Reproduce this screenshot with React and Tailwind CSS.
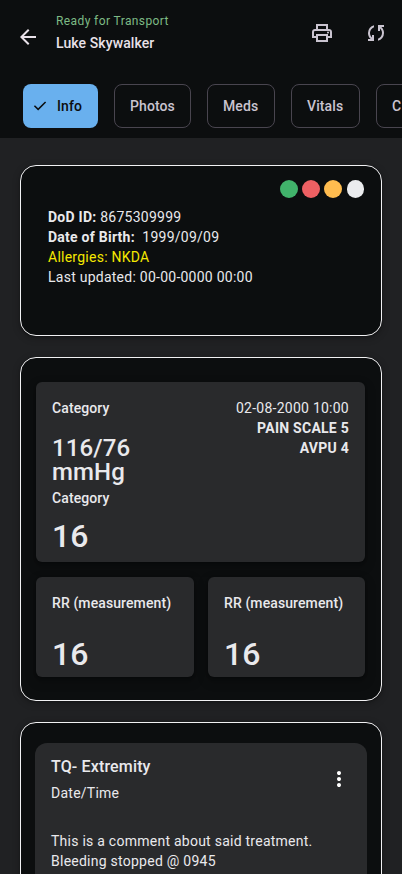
import clsx from 'clsx';

const TABS = [
  { label: 'Info', width: 'w-[75px]' },
  { label: 'Photos', width: 'w-[77px]' },
  { label: 'Meds', width: 'w-[68px]' },
  { label: 'Vitals', width: 'w-[69px]' },
  { label: 'C', width: 'w-[69px]' },
];

const DOTS = ['bg-[#41b36b]', 'bg-[#ee6063]', 'bg-[#ffbc4f]', 'bg-[#ebecee]'];

const ICONS = {
  back: 'M313-440l224 224-57 56-320-320 320-320 57 56-224 224h487v80H313Z',
  print:
    'M640-640v-120H320v120h-80v-200h480v200h-80Zm-480 80h640-640Zm560 100q17 0 28.5-11.5T760-500q0-17-11.5-28.5T720-540q-17 0-28.5 11.5T680-500q0 17 11.5 28.5T720-460Zm-80 260v-160H320v160h320Zm80 80H240v-160H80v-240q0-51 35-85.5t85-34.5h560q51 0 85.5 34.5T880-520v240H720v160Zm80-240v-160q0-17-11.5-28.5T760-560H200q-17 0-28.5 11.5T160-520v160h80v-80h480v80h80Z',
  sync:
    'M160-160v-80h110l-16-14q-52-46-73-105t-21-119q0-111 66.5-197.5T400-790v84q-72 26-116 88.5T240-478q0 45 17 87.5t53 78.5l10 10v-98h80v240H160Zm400-10v-84q72-26 116-88.5T720-482q0-45-17-87.5T650-648l-10-10v98h-80v-240h240v80H690l16 14q49 49 71.5 106.5T800-482q0 111-66.5 197.5T560-170Z',
  check: 'M382-240 154-468l57-57 171 171 367-367 57 57-424 424Z',
  more:
    'M480-160q-33 0-56.5-23.5T400-240q0-33 23.5-56.5T480-320q33 0 56.5 23.5T560-240q0 33-23.5 56.5T480-160Zm0-240q-33 0-56.5-23.5T400-480q0-33 23.5-56.5T480-560q33 0 56.5 23.5T560-480q0 33-23.5 56.5T480-400Zm0-240q-33 0-56.5-23.5T400-720q0-33 23.5-56.5T480-800q33 0 56.5 23.5T560-720q0 33-23.5 56.5T480-640Z',
};

const Icon = ({ name, className }) => (
  <svg viewBox="0 -960 960 960" fill="currentColor" className={clsx('shrink-0', className)}>
    <path d={ICONS[name]} />
  </svg>
);

const Header = () => (
  <header className="h-[138px] bg-[#0c0e0f] overflow-hidden">
    <div className="flex items-start h-[84px] pl-4 pr-[14px]">
      <button className="mt-[25px] text-[#e9e1e9]">
        <Icon name="back" className="w-6 h-6" />
      </button>
      <div className="ml-4 mt-3 flex-1">
        <p className="text-xs leading-4 pt-px tracking-[0.4px] text-[#7dba85]">Ready for Transport</p>
        <h1 className="mt-[4px] text-sm leading-5 font-medium tracking-[0.1px] text-[#e9e1e9]">Luke Skywalker</h1>
      </div>
      <div className="flex gap-[30px] mt-[21px] text-[#cac4d0]">
        <button><Icon name="print" className="w-6 h-6" /></button>
        <button><Icon name="sync" className="w-6 h-6" /></button>
      </div>
    </div>
    <nav className="flex gap-4 pl-[23px]">
      {TABS.map(({ label, width }, i) => (
        <button
          key={label}
          className={clsx(
            'flex items-center shrink-0 h-11 rounded-lg text-sm font-medium tracking-[0.1px]',
            width,
            i === 0 ? 'gap-2 pl-2 bg-[#69b0ee] text-[#0c0e0f]' : 'pl-[15px] border border-[#49454f] text-[#cac4d0]'
          )}
        >
          {i === 0 && <Icon name="check" className="w-[18px] h-[18px]" />}
          {label}
        </button>
      ))}
    </nav>
  </header>
);

const Card = ({ className, children }) => (
  <section
    className={clsx(
      'w-[362px] rounded-[16px] border border-[#f1f1f3] bg-[#0c0e0f] shadow-[0_2px_6px_2px_rgba(0,0,0,0.15),0_1px_2px_rgba(0,0,0,0.3)]',
      className
    )}
  >
    {children}
  </section>
);

const Tile = ({ className, children }) => (
  <div
    className={clsx(
      'rounded-[6px] bg-[#292a2c] px-4 shadow-[0_4px_8px_3px_rgba(0,0,0,0.15),0_1px_3px_rgba(0,0,0,0.3)]',
      className
    )}
  >
    {children}
  </div>
);

const Label = ({ children }) => (
  <p className="text-sm leading-5 font-medium tracking-[0.1px] whitespace-nowrap">{children}</p>
);

const Measurement = ({ className }) => (
  <Tile className={clsx('h-[100px] pt-4', className)}>
    <Label>RR (measurement)</Label>
    <p className="mt-[21px] text-[32px] leading-10 font-medium">16</p>
  </Tile>
);

const App = () => (
  <div className="w-full h-[874px] overflow-hidden bg-[#202123] text-[#e9e9ec] font-['Roboto',sans-serif]">
    <Header />
    <main className="flex flex-col items-center px-px pt-[27px]">
      <Card className="h-[171px] pl-[27px] pr-[16.6px] pt-[14px]">
        <div className="flex justify-end gap-[4.6px]">
          {DOTS.map((dot) => (
            <span key={dot} className={clsx('w-[17.7px] h-[17.7px] rounded-full', dot)} />
          ))}
        </div>
        <div className="mt-[9.3px] text-sm leading-5 tracking-[0.25px]">
          <p><b className="font-bold">DoD ID:</b> 8675309999</p>
          <p><b className="font-bold">Date of Birth:</b>&nbsp; 1999/09/09</p>
          <p className="text-[#f5e800]">Allergies: NKDA</p>
          <p>Last updated: 00-00-0000 00:00</p>
        </div>
      </Card>

      <Card className="mt-[21px] h-[344px] pt-6 px-[15px]">
        <Tile className="flex justify-between h-[180px] pt-4 w-[329px]">
          <div>
            <Label>Category</Label>
            <p className="mt-[18px] text-2xl leading-6 font-medium tracking-[0.1px]">116/76<br />mmHg</p>
            <div className="mt-1"><Label>Category</Label></div>
            <p className="mt-[8px] text-[32px] leading-10 font-medium">16</p>
          </div>
          <div className="text-right text-sm leading-5 tracking-[0.25px]">
            <p>02-08-2000 10:00</p>
            <p className="font-bold">PAIN SCALE 5</p>
            <p className="font-bold">AVPU 4</p>
          </div>
        </Tile>
        <div className="mt-[15px] flex gap-[14px]">
          <Measurement className="w-[158px]" />
          <Measurement className="w-[157px]" />
        </div>
      </Card>

      <Card className="mt-[21px] h-[344px] pt-5 px-[14px]">
        <div className="w-[332px] h-[300px] rounded-xl bg-[#292a2c] pl-4 pt-3">
          <div className="flex justify-between">
            <div>
              <h2 className="text-base leading-6 font-medium tracking-[0.15px]">TQ- Extremity</h2>
              <p className="mt-1 text-sm leading-5 tracking-[0.25px]">Date/Time</p>
            </div>
            <button className="mt-3 mr-4 h-6 text-white">
              <Icon name="more" className="w-6 h-6" />
            </button>
          </div>
          <p className="mt-7 text-sm leading-5 tracking-[0.25px]">
            This is a comment about said treatment.<br />
            Bleeding stopped @ 0945
          </p>
        </div>
      </Card>
    </main>
  </div>
);

export default App;
